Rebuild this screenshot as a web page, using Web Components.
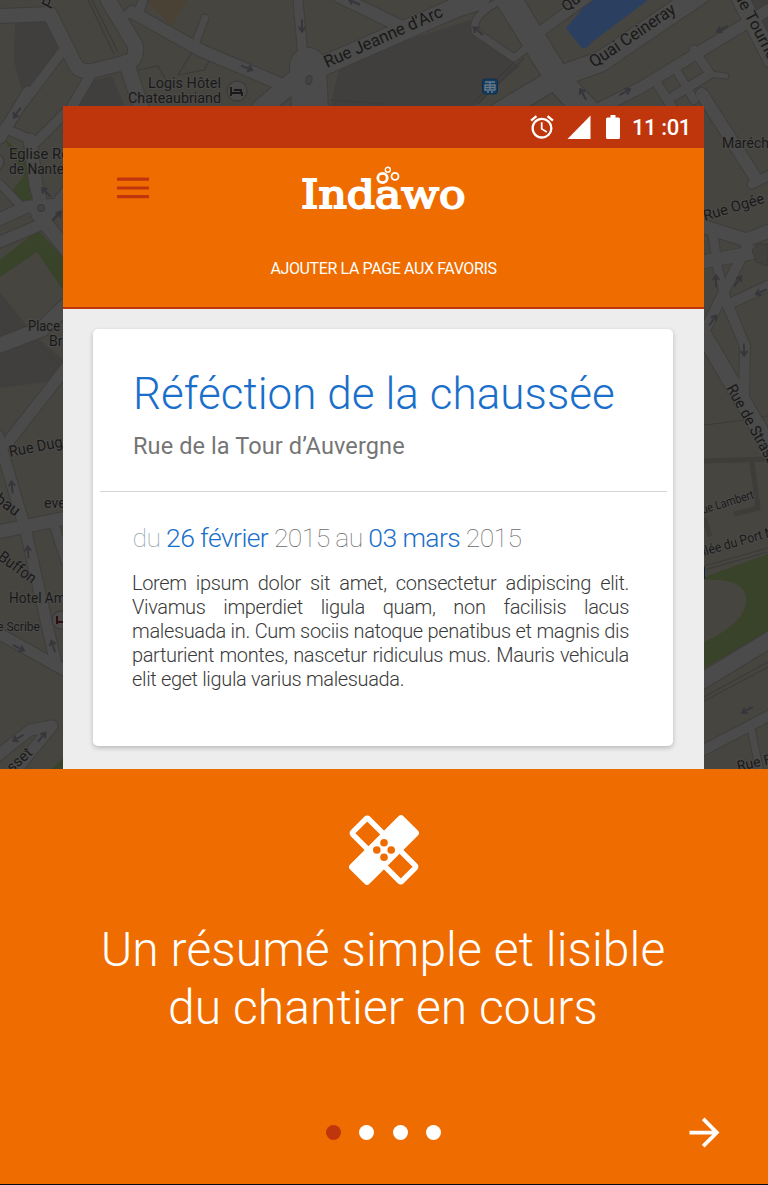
<!DOCTYPE html>
<html lang="fr">
<head>
<meta charset="utf-8">
<title>Indawo</title>
<style>
html,body{margin:0;padding:0}
body{width:768px;height:1185px;overflow:hidden;background:#000;font-family:Roboto,"Liberation Sans",sans-serif}
</style>
</head>
<body>
<indawo-onboarding></indawo-onboarding>

<script>
const define = (name, html) => {
  const t = document.createElement('template');
  t.innerHTML = html;
  customElements.define(name, class extends HTMLElement {
    constructor() {
      super();
      this.attachShadow({ mode: 'open' }).append(t.content.cloneNode(true));
    }
  });
};

const arrow = (x, y, a) => `<path transform="translate(${x} ${y}) rotate(${a})" d="M-6.500 0H4M1 -3.200L5.500 0L1 3.200" fill="none" stroke="#36363b" stroke-width="2"/>`;
const roads = [
  ['M0 16L50 14L76 66Q80 72 92 71L128 62', 14], ['M108 0L135 45Q138 58 126 66', 15], ['M126 62L142 110', 15],
  ['M62 52L18 110', 9], ['M90 76L70 110', 10], ['M143 0L139 12L128 14', 9], ['M132 12L200 50L285 86', 12],
  ['M205 18L196 42', 7], ['M298 0L304 70', 9], ['M262 108L300 76L455 8L480 0', 19], ['M338 -4L400 26', 12], ['M308 66L310 110', 36],
  ['M504 -8L560 82L592 116', 25], ['M500 112L560 76L600 62L700 -6', 20], ['M534 36L592 -6', 10],
  ['M592 112L640 88L768 10', 11], ['M738 -6L772 60', 17], ['M494 4Q470 18 476 32L514 58L524 50', 7],
  ['M656 82L674 110', 9], ['M674 66L694 100', 8], ['M694 50L710 74L674 96', 9], ['M710 74L726 76', 5],
  ['M568 84L582 110', 5],
  ['M28 92L0 138', 11], ['M66 112L36 142L4 128', 9], ['M30 140L36 185L44 215', 13], ['M0 184L18 203', 8], ['M0 219L26 207L66 204', 12],
  ['M0 242L42 224L66 192', 11], ['M38 214L70 254', 14], ['M0 345L42 329L66 306', 15], ['M66 368L8 442', 11],
  ['M20 428L0 450', 9], ['M-2 436L26 532L56 664', 11], ['M-2 532L66 518', 13], ['M54 524L66 562', 9], ['M-4 632L66 671', 11],
  ['M-4 757L30 730L52 726L12 775', 11],
  ['M702 94L757 180', 12], ['M752 184L772 174', 9], ['M702 226L746 240L772 230', 13], ['M702 262L756 252', 13],
  ['M772 284L727 305', 10], ['M748 244L700 340', 10], ['M712 228L718 270L727 303', 9], ['M727 303L745 346L744 396', 10], ['M702 332L776 458', 16],
  ['M700 682L776 636', 16], ['M700 752L776 712', 10], ['M750 724L760 772', 7]
];
const label = (x, y, w, txt, size = 14.5, a = 0) =>
  `<text transform="translate(${x} ${y}) rotate(${a})" font-size="${size}"${w ? ` textLength="${w}" lengthAdjust="spacingAndGlyphs"` : ''}>${txt}</text>`;

define('city-map', `
<style>
:host{display:block;overflow:hidden;background:#474540}
svg{display:block}
text{font-family:Roboto,sans-serif;fill:#191919;stroke:#4c4b49;stroke-width:2px;paint-order:stroke;stroke-linejoin:round}
</style>
<svg width="768" height="769" viewBox="0 0 768 769">
  <g fill="#413f3e">
    <path d="M15 24L50 20L62 52L22 92L14 60Z"/><path d="M340 62L470 20L476 38L520 66L470 110H330Z"/>
    <path d="M360 60H384V110H350Z"/><path d="M80 84L112 76L126 110H74Z"/>
    <path d="M0 292L34 335L63 360V380L30 384L0 388Z"/><path d="M750 0H768V30Z"/>
  </g>
  <path d="M145 0H187L172 26Z" fill="#4a4235"/>
  <g fill="#38432a">
    <path d="M4 138L28 160L34 196L25 206L11 192L24 176Z"/><path d="M0 260L38 230L63 258V290L37 252L0 277Z"/>
    <path d="M704 577L768 554V632L704 668V642Q748 622 746 598Q744 578 704 580Z"/><path d="M52 769L63 758V769Z"/>
  </g>
  <path d="M566 28L590 0H648L592 42Q584 52 580 46Z" fill="#2b4061"/>
  <g fill="none" stroke="#3c3b39" stroke-width="1.200">
    <path d="M88 0L114 54M92 0L118 52"/><path d="M524 58L478 104M520 56L474 102" /><path d="M192 52L178 75L204 70L212 56"/>
    <path d="M704 697L768 662M704 701L768 667M704 566L768 548M704 570L768 552"/><path d="M138 70L158 66L166 80"/><path d="M330 100L384 104"/>
  </g>
  <path d="M704 461L768 459M752 462L758 508L734 514M704 518L710 536" fill="none" stroke="#3e3d3a" stroke-width="5"/>
  <path d="M704 425Q736 422 768 416M36 341L60 366" fill="none" stroke="#3c3b38" stroke-width="1"/>
  <g fill="none" stroke="#3e3d3b" stroke-linejoin="round" stroke-linecap="round">${roads.map(([d, w]) => `<path d="${d}" stroke-width="${w + 2}"/>`).join('')}</g>
  <g fill="none" stroke="#4b4b4b" stroke-linejoin="round" stroke-linecap="round">${roads.map(([d, w]) => `<path d="${d}" stroke-width="${w}"/>`).join('')}</g>
  <path d="M752 250L758 244H768V266L756 262Z" fill="#43413d" stroke="#3b3a38"/>
  <ellipse cx="309" cy="80" rx="3" ry="4.500" fill="#444340" stroke="#3b3a38" transform="rotate(15 309 80)"/>
  <circle cx="41" cy="208" r="3.500" fill="#444340" stroke="#363636"/>
  ${arrow(302, 26, 90)}${arrow(247, 68, 22)}${arrow(354, 2, 205)}${arrow(478, 31, 218)}${arrow(583, 94, 240)}${arrow(625, 92, -28)}${arrow(722, 29, 152)}
  ${arrow(17, 113, 125)}${arrow(46, 192, 225)}${arrow(57, 216, -45)}${arrow(12, 487, 265)}${arrow(28, 552, 265)}${arrow(53, 646, 252)}${arrow(19, 648, 27)}${arrow(18, 738, 150)}${arrow(42, 737, -50)}
  ${arrow(716, 281, 268)}${arrow(738, 281, -55)}${arrow(713, 320, -55)}${arrow(761, 292, 155)}${arrow(744, 350, 88)}${arrow(747, 710, 152)}
  ${label(51, 10, 0, 'P', 16, -62)}
  ${label(148, 87.5, 73, 'Logis Hôtel')}${label(128, 102.5, 93, 'Chateaubriand')}
  ${label(327, 68, 128, 'Rue Jeanne d’Arc', 17, -24)}
  ${label(594, 68, 100, 'Quai Ceineray', 17, -34)}
  ${label(566, 12, 0, 'Quai', 15, -35)}
  ${label(729, -14, 112, 'Rue Tournefort', 16, 62)}
  ${label(722, 148, 58, 'Maréchal')}
  ${label(9, 158.5, 60, 'Eglise Ré')}${label(9, 173.5, 62, 'de Nantes')}
  ${label(28, 330.5, 32, 'Place', 14)}${label(49, 345.5, 17, 'Bri', 14)}
  ${label(705, 221, 63, 'Rue Ogée', 15, -17)}
  ${label(726, 388, 118, 'Rue de Strasbourg', 15.5, 61)}
  ${label(10, 457, 70, 'Rue Dugué', 15.5, -11)}
  ${label(44, 507.5, 34, 'event')}
  ${label(-20, 491, 0, 'hébau', 16, 36)}${label(-3, 559, 43, 'Buffon', 16, 36)}
  ${label(9, 602.5, 75, 'Hotel Amiral')}${label(-3, 630.5, 43, 'e Scribe', 13)}
  ${label(-5, 755, 0, 'e', 15, -40)}${label(12, 773, 0, 'sset', 15, -42)}
  ${label(703, 514, 54, 'ue Lambert', 12.5, -17)}${label(704, 556, 82, 'llée du Port Ma', 13.5, -16)}
  ${label(738, 771, 0, 'Rue Fra', 14, -12)}
  <g>
    <circle cx="237" cy="91" r="10" fill="#4b4a48" stroke="#383735"/><path d="M231 87V96M231 93H242V96M234 90H241V93" stroke="#191919" stroke-width="1.800" fill="none"/>
    <circle cx="61" cy="620" r="9" fill="#4b4a48" stroke="#383735"/><path d="M57 616V624M57 622H63" stroke="#2a1010" stroke-width="2" fill="none"/>
    <circle cx="-5" cy="162" r="9" fill="#4b4a48" stroke="#383735"/>
    <rect x="482.500" y="79" width="15" height="15" rx="3" fill="#123d63" stroke="#0d2e4c"/>
    <path d="M485 82H495M490 82V84M485 85H495V90H485ZM485 87.500H495M490 85V90M487 92H489M491 92H493" stroke="#6c7a86" stroke-width="1.300" fill="none"/>
  </g>
  <path d="M704 567V579" stroke="#0d2440" stroke-width="2"/>
</svg>`);

define('status-bar', `
<style>
:host{display:flex;height:42px;box-sizing:border-box;background:#bf360c;color:#fff;align-items:center;justify-content:flex-end;padding-right:14px}
svg{display:block}
.alarm{margin-right:11px}.signal{margin-right:15px}.battery{margin-right:12px}
time{font-weight:500;font-size:22px;line-height:42px;width:58px;white-space:pre;letter-spacing:-.4px;padding-top:1px;box-sizing:border-box}
</style>
<svg class="alarm" width="28" height="28" viewBox="0 0 24 24" fill="#fff"><path d="M22 5.720l-4.600-3.860-1.290 1.530 4.600 3.860L22 5.720zM7.880 3.390L6.600 1.860 2 5.710l1.290 1.530 4.590-3.850zM12.500 8H11v6l4.750 2.850.75-1.230-4-2.370V8zM12 4c-4.970 0-9 4.030-9 9s4.020 9 9 9a9 9 0 0 0 0-18zm0 16c-3.870 0-7-3.130-7-7s3.130-7 7-7 7 3.130 7 7-3.130 7-7 7z"/></svg>
<svg class="signal" width="24" height="24" viewBox="0 0 24 24"><path d="M.5 24H23.500V.5Z" fill="#fff"/></svg>
<svg class="battery" width="14" height="24" viewBox="0 0 14 24"><path d="M4.500 0H9.500V2.500H12.500Q14 2.500 14 4V22.500Q14 24 12.500 24H1.500Q0 24 0 22.500V4Q0 2.500 1.500 2.500H4.500Z" fill="#fff"/></svg>
<time>11 :01</time>`);

define('indawo-logo', `
<style>:host{display:block}svg{display:block}
text{font:40px "DejaVu Serif",serif;fill:#fff;stroke:#fff;stroke-width:1.900px;stroke-linejoin:miter}</style>
<svg width="166" height="46" viewBox="0 0 166 46">
  <text x="0" y="42.200" textLength="164.500" lengthAdjust="spacingAndGlyphs">Indawo</text>
  <g fill="#ef6c00" stroke="#fff">
    <circle cx="81.500" cy="12" r="4.700" stroke-width="2.800"/><circle cx="94" cy="10.300" r="3.500" stroke-width="1.800"/><circle cx="86.800" cy="3.800" r="2.500" stroke-width="1.400"/>
  </g>
</svg>`);

define('app-header', `
<style>
:host{display:grid;grid-template-columns:1fr auto 1fr;grid-template-rows:112px 47px;box-sizing:border-box;height:161px;background:#ef6c00;border-bottom:2px solid #bf360c;color:#fff}
.menu{display:block;margin:29px 0 0 54px}
indawo-logo{margin-top:18px}
.action{grid-column:1/-1;text-align:center;font-size:16px;line-height:18px;letter-spacing:-.38px}
</style>
<svg class="menu" width="32" height="22" viewBox="0 0 32 22"><path d="M0 2.200H32M0 11H32M0 19.700H32" stroke="#bf360c" stroke-width="3.200"/></svg>
<indawo-logo></indawo-logo><span></span>
<div class="action"><slot></slot></div>`);

define('work-card', `
<style>
:host{display:block;box-sizing:border-box;width:580px;height:417px;background:#fff;border-radius:5px;box-shadow:0 2px 5px rgba(0,0,0,.22)}
header{height:163px;box-sizing:border-box;padding:39px 0 0 33px;margin:0 6px 0 7px;border-bottom:1.500px solid #d5d5d5}
h1{margin:0;font-weight:300;font-size:44px;line-height:52px;color:#1a6fca;white-space:nowrap;letter-spacing:.05px}
.street{font-size:23.500px;line-height:28px;margin-top:12px;color:#757575;white-space:nowrap;letter-spacing:.11px}
.dates{margin:31px 0 0 39.500px;font-size:26.500px;line-height:30px;white-space:nowrap;letter-spacing:-.6px}
.body{margin:18px 44px 0 39px;font-weight:300;font-size:20px;line-height:24px;color:#3a3a3a;text-align:justify;letter-spacing:-.35px}
</style>
<header><h1><slot name="title"></slot></h1><div class="street"><slot name="street"></slot></div></header>
<div class="dates"><slot name="dates"></slot></div>
<div class="body"><slot></slot></div>`);

define('date-range', `
<style>:host{display:block;font-weight:100;color:#6c6c6c}b{font-weight:300;color:#1a6fca}.du{color:#90a4ae}</style>
<span class="du">du</span> <b>26 février</b> 2015 au <b>03 mars</b> 2015`);

define('phone-preview', `
<style>
:host{display:block;background:#ededed}
main{display:flex;justify-content:center;padding:20px 1px 0 0}
</style>
<status-bar></status-bar>
<app-header>AJOUTER LA PAGE AUX FAVORIS</app-header>
<main><work-card>
  <span slot="title">Réféction de la chaussée</span>
  <span slot="street">Rue de la Tour d’Auvergne</span>
  <date-range slot="dates"></date-range>
  Lorem ipsum dolor sit amet, consectetur adipiscing elit. Vivamus imperdiet ligula quam, non facilisis lacus malesuada in. Cum sociis natoque penatibus et magnis dis parturient montes, nascetur ridiculus mus. Mauris vehicula elit eget ligula varius malesuada.
</work-card></main>`);

define('bandage-icon', `
<style>:host{display:block}svg{display:block}</style>
<svg width="72" height="72" viewBox="-36 -36 72 72">
  <g transform="rotate(45)"><rect x="-34.700" y="-11" width="69.400" height="22" rx="1.500" fill="none" stroke="#fff" stroke-width="5.400"/></g>
  <g transform="rotate(-45)"><rect x="-37.700" y="-13.700" width="75.400" height="27.400" rx="3.500" fill="#fff"/></g>
  <g fill="#ef6c00"><circle cy="-7.200" r="3.800"/><circle cy="7.200" r="3.800"/><circle cx="-7.200" r="3.800"/><circle cx="7.200" r="3.800"/></g>
</svg>`);

define('page-controls', `
<style>
:host{display:grid;grid-template-columns:1fr auto 1fr;align-items:center;height:46px}
.dots{grid-column:2;display:flex;gap:18.300px;margin-right:1px}
i{width:15px;height:15px;border-radius:50%;background:#fff}i.on{background:#bf360c}
svg{display:block;justify-self:end;margin-right:41.500px}
</style>
<div class="dots"><i class="on"></i><i></i><i></i><i></i></div>
<svg width="45" height="45" viewBox="0 0 24 24"><path d="M12 4l-1.410 1.410L16.170 11H4v2h12.170l-5.580 5.590L12 20l8-8z" fill="#fff"/></svg>`);

define('intro-panel', `
<style>
:host{display:flex;flex-direction:column;align-items:stretch;box-sizing:border-box;height:415px;background:#ef6c00;color:#fff;padding-top:45px}
bandage-icon{align-self:center}
h2{margin:35px 0 0;text-align:center;font-weight:300;font-size:48px;line-height:58px;letter-spacing:.08px;padding-right:2px}
page-controls{margin-top:72px}
</style>
<bandage-icon></bandage-icon>
<h2><slot></slot></h2>
<page-controls></page-controls>`);

define('indawo-onboarding', `
<style>
:host{display:block;width:768px;height:1185px;background:#0a0a12}
.hero{display:grid;grid-template:769px/768px}
.hero>*{grid-area:1/1}
phone-preview{margin:106px 64px 0 63px}
</style>
<div class="hero"><city-map></city-map><phone-preview></phone-preview></div>
<intro-panel>Un résumé simple et lisible<br>du chantier en cours</intro-panel>`);
</script>
</body>
</html>
